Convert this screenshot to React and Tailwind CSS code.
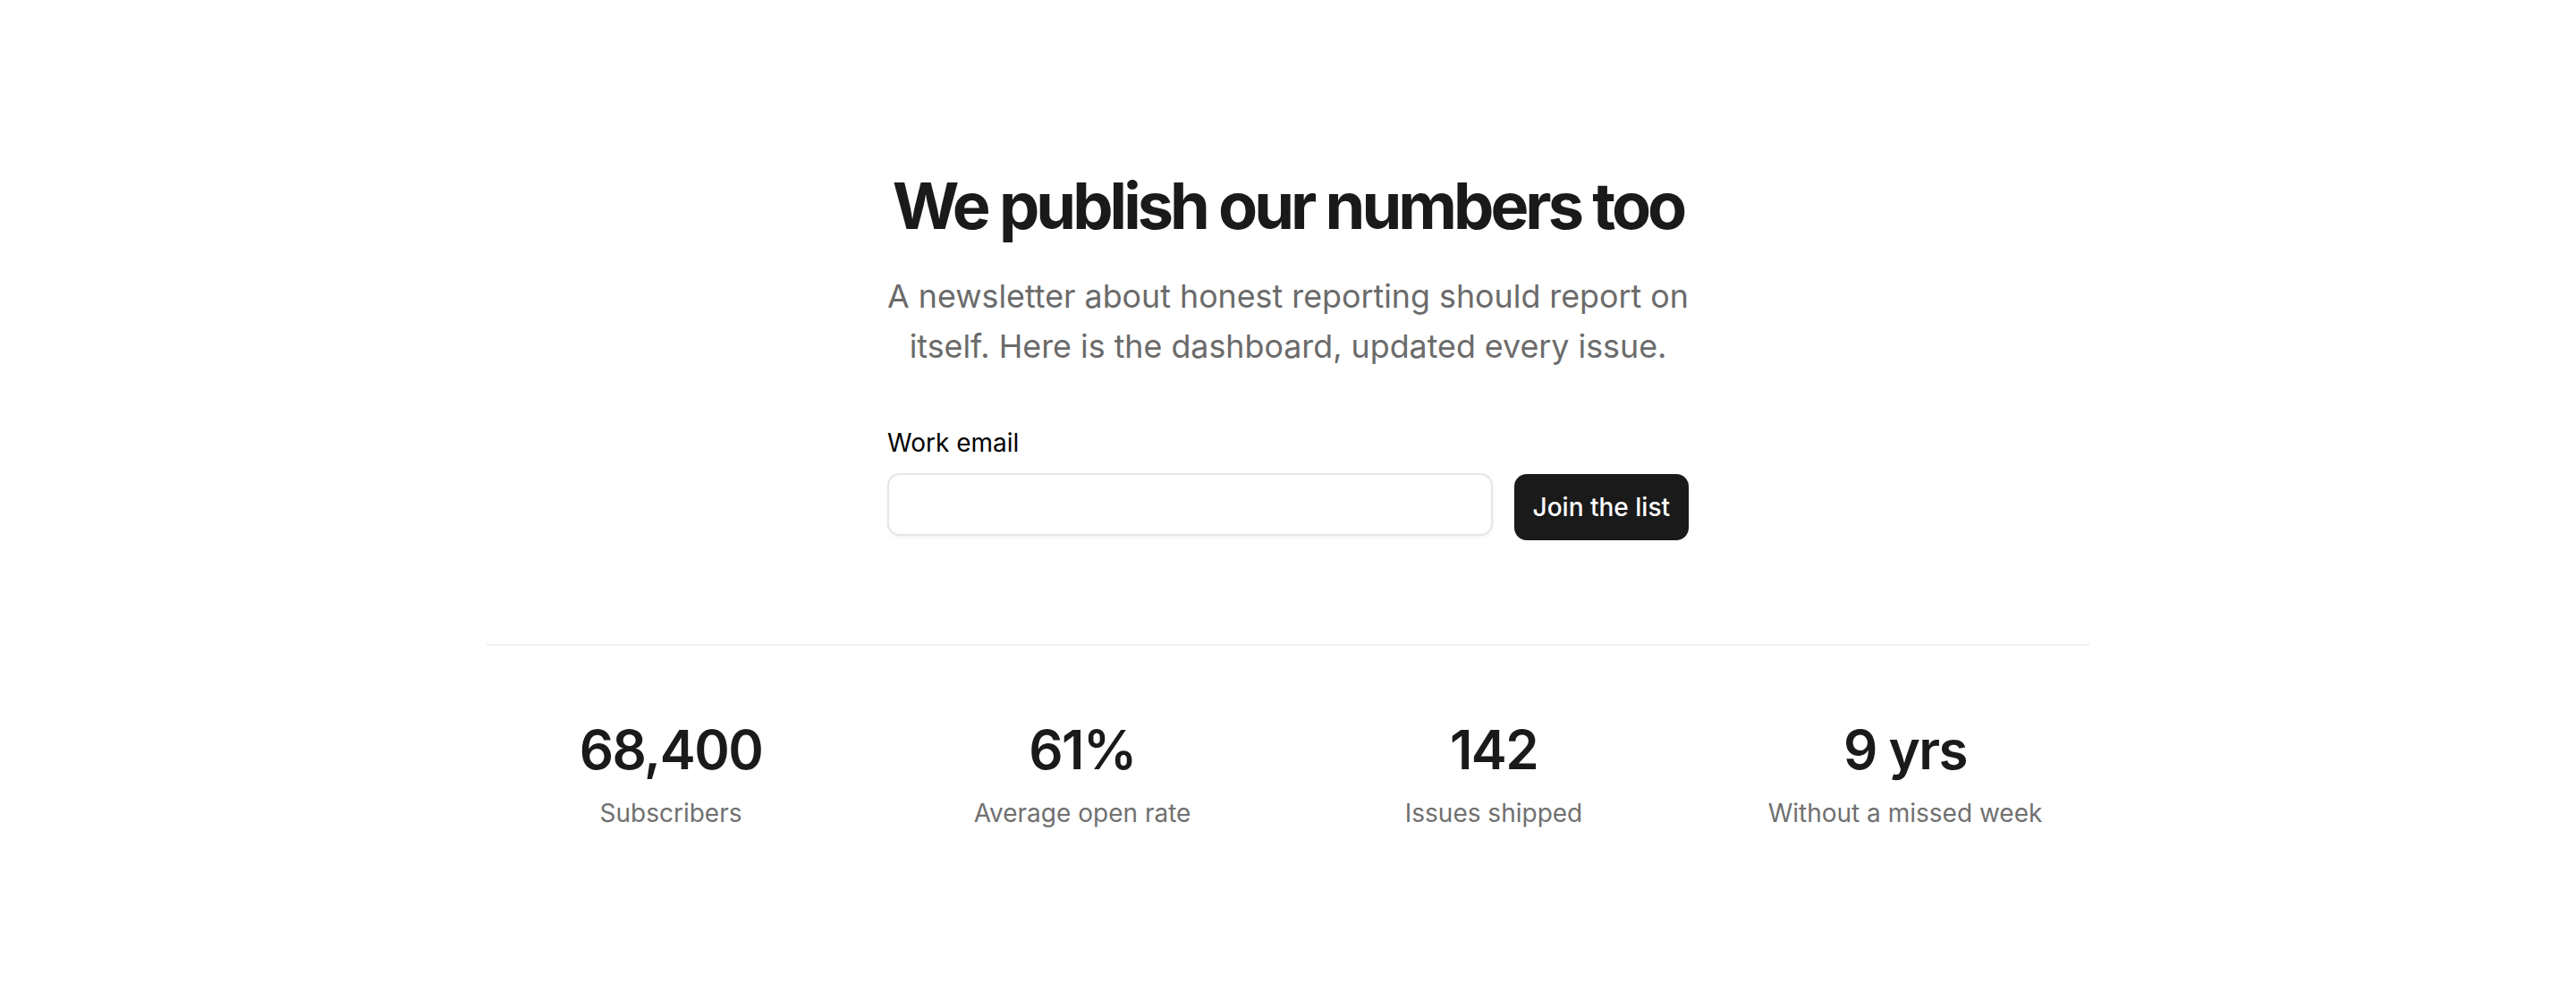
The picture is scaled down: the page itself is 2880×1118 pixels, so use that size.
const stats = [
  { value: '68,400', label: 'Subscribers' },
  { value: '61%', label: 'Average open rate' },
  { value: '142', label: 'Issues shipped' },
  { value: '9 yrs', label: 'Without a missed week' },
]

export default function App() {
  return (
    <div className="min-h-screen bg-white font-['Inter',sans-serif] text-[#1a1a1a]">
      <div className="mx-auto max-w-[1792px] pt-[190px] pb-[160px]">
        <div className="mx-auto max-w-[896px] text-center">
          <h1 className="whitespace-nowrap text-[72px] font-bold leading-[1.1] tracking-[-0.055em]">We publish our numbers too</h1>
          <p className="mt-[34px] text-[35.8px] leading-[56px] text-[#6b6b6b]">
            A newsletter about honest reporting should report on itself. Here is the dashboard, updated every issue.
          </p>
        </div>

        <form className="mx-auto mt-[59px] max-w-[896px]" onSubmit={(e) => e.preventDefault()}>
          <label htmlFor="email" className="block text-[28px] text-black">Work email</label>
          <div className="mt-[13px] flex items-start gap-6">
            <input
              id="email"
              type="email"
              className="h-[70px] flex-1 rounded-[14px] border-2 border-[#e6e6e6] bg-white px-5 text-[28px] shadow-[0_2px_4px_rgba(0,0,0,0.05)] outline-none"
            />
            <button type="submit" className="mt-px h-[74px] rounded-[14px] bg-[#1a1a1a] px-[21px] text-[28px] font-medium text-white">
              Join the list
            </button>
          </div>
        </form>

        <div className="mt-[116px] border-t-2 border-[#efefef] pt-[86px]">
          <div className="grid grid-cols-4 gap-12">
            {stats.map((s) => (
              <div key={s.label} className="text-center">
                <div className="text-[60px] font-semibold leading-none tracking-[-0.025em]">{s.value}</div>
                <div className="mt-[20px] text-[28px] text-[#707070]">{s.label}</div>
              </div>
            ))}
          </div>
        </div>
      </div>
    </div>
  )
}
